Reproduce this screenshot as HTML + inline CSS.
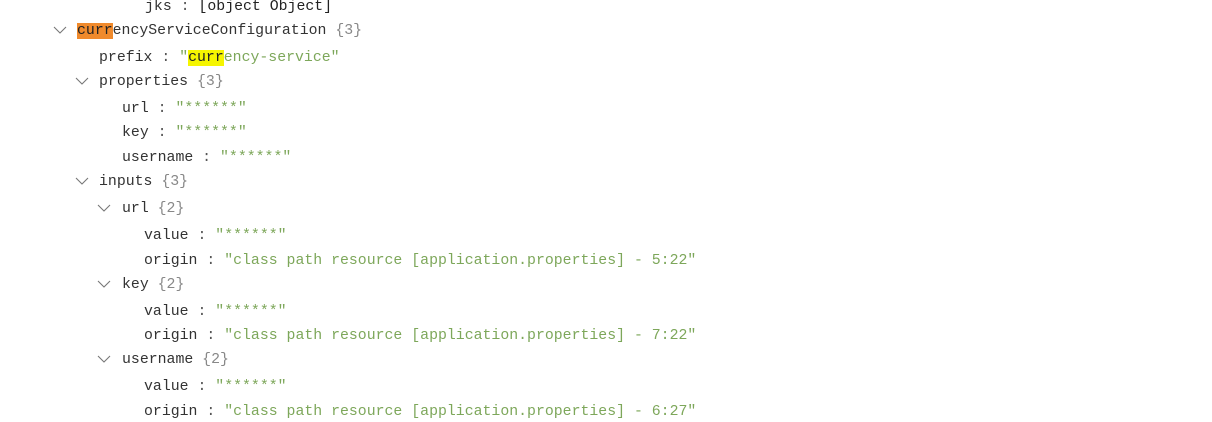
<html><head><style>
body{margin:0;width:1212px;height:422px;background:#fff;position:relative;overflow:hidden;font-family:"Liberation Mono",monospace;font-size:14.85px;color:#333}
.r{position:absolute;height:20px;line-height:20px;white-space:pre}
.s{color:#7da75a}.b{color:#888}.c{color:#555}
.o{background:#f08a2c;color:#222}.y{background:#f5f500;color:#222}
.v{position:absolute;width:14px;height:8px}
</style></head><body>
<div class="r" style="left:145px;top:-3px">jks<span class="c"> : </span><span style="color:#222">[object Object]</span></div>
<svg class="v" style="left:53px;top:26px" viewBox="0 0 14 8"><path d="M1 1L7 7L13 1" fill="none" stroke="#777" stroke-width="1.1"/></svg>
<div class="r" style="left:77px;top:21px"><span class="o">curr</span>encyServiceConfiguration <span class="b">{3}</span></div>
<div class="r" style="left:99px;top:48px">prefix<span class="c"> : </span><span class="s">"<span class="y">curr</span>ency-service"</span></div>
<svg class="v" style="left:75px;top:77px" viewBox="0 0 14 8"><path d="M1 1L7 7L13 1" fill="none" stroke="#777" stroke-width="1.1"/></svg>
<div class="r" style="left:99px;top:72px">properties <span class="b">{3}</span></div>
<div class="r" style="left:122px;top:99px">url<span class="c"> : </span><span class="s">"******"</span></div>
<div class="r" style="left:122px;top:123px">key<span class="c"> : </span><span class="s">"******"</span></div>
<div class="r" style="left:122px;top:148px">username<span class="c"> : </span><span class="s">"******"</span></div>
<svg class="v" style="left:75px;top:177px" viewBox="0 0 14 8"><path d="M1 1L7 7L13 1" fill="none" stroke="#777" stroke-width="1.1"/></svg>
<div class="r" style="left:99px;top:172px">inputs <span class="b">{3}</span></div>
<svg class="v" style="left:97px;top:204px" viewBox="0 0 14 8"><path d="M1 1L7 7L13 1" fill="none" stroke="#777" stroke-width="1.1"/></svg>
<div class="r" style="left:122px;top:199px">url <span class="b">{2}</span></div>
<div class="r" style="left:144px;top:226px">value<span class="c"> : </span><span class="s">"******"</span></div>
<div class="r" style="left:144px;top:251px">origin<span class="c"> : </span><span class="s">"class path resource [application.properties] - 5:22"</span></div>
<svg class="v" style="left:97px;top:280px" viewBox="0 0 14 8"><path d="M1 1L7 7L13 1" fill="none" stroke="#777" stroke-width="1.1"/></svg>
<div class="r" style="left:122px;top:275px">key <span class="b">{2}</span></div>
<div class="r" style="left:144px;top:302px">value<span class="c"> : </span><span class="s">"******"</span></div>
<div class="r" style="left:144px;top:326px">origin<span class="c"> : </span><span class="s">"class path resource [application.properties] - 7:22"</span></div>
<svg class="v" style="left:97px;top:355px" viewBox="0 0 14 8"><path d="M1 1L7 7L13 1" fill="none" stroke="#777" stroke-width="1.1"/></svg>
<div class="r" style="left:122px;top:350px">username <span class="b">{2}</span></div>
<div class="r" style="left:144px;top:377px">value<span class="c"> : </span><span class="s">"******"</span></div>
<div class="r" style="left:144px;top:402px">origin<span class="c"> : </span><span class="s">"class path resource [application.properties] - 6:27"</span></div>
</body></html>
